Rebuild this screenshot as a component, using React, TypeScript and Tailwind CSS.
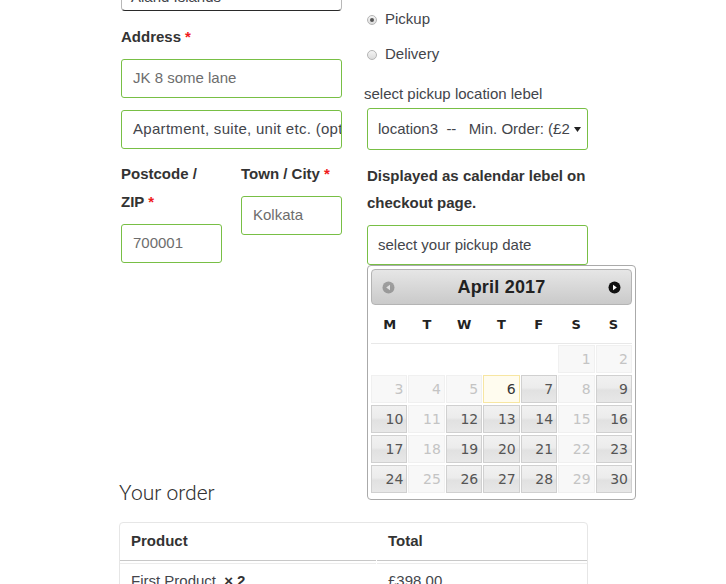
import React from "react";

const FONT = { fontFamily: '"Liberation Sans", Arial, sans-serif' };
const CAL_FONT = { fontFamily: '"DejaVu Sans", Verdana, sans-serif' };

function Req() {
  return <span className="text-[#f01c1c] font-bold ml-[4px]">*</span>;
}

function Radio({ checked, label }: { checked?: boolean; label: string }) {
  return (
    <div className="h-[35px] flex items-center">
      <span className="w-[10px] h-[10px] rounded-full border border-[#b5b5b5] bg-gradient-to-b from-[#f4f4f4] to-[#dcdcdc] flex items-center justify-center">
        {checked && <span className="w-[4px] h-[4px] rounded-full bg-[#555]" />}
      </span>
      <span className="ml-[8px] text-[15px] text-[#43454b]">{label}</span>
    </div>
  );
}

type Cell = { d: number; s: "on" | "off" | "today" } | null;

const rows: Cell[][] = [
  [null, null, null, null, null, { d: 1, s: "off" }, { d: 2, s: "off" }],
  [
    { d: 3, s: "off" },
    { d: 4, s: "off" },
    { d: 5, s: "off" },
    { d: 6, s: "today" },
    { d: 7, s: "on" },
    { d: 8, s: "off" },
    { d: 9, s: "on" },
  ],
  [
    { d: 10, s: "on" },
    { d: 11, s: "off" },
    { d: 12, s: "on" },
    { d: 13, s: "on" },
    { d: 14, s: "on" },
    { d: 15, s: "off" },
    { d: 16, s: "on" },
  ],
  [
    { d: 17, s: "on" },
    { d: 18, s: "off" },
    { d: 19, s: "on" },
    { d: 20, s: "on" },
    { d: 21, s: "on" },
    { d: 22, s: "off" },
    { d: 23, s: "on" },
  ],
  [
    { d: 24, s: "on" },
    { d: 25, s: "off" },
    { d: 26, s: "on" },
    { d: 27, s: "on" },
    { d: 28, s: "on" },
    { d: 29, s: "off" },
    { d: 30, s: "on" },
  ],
];

function DayCell({ c }: { c: Cell }) {
  if (!c) return <div className="h-[28px]" />;
  const base = "h-[28px] border flex items-center justify-end pr-[3px] text-[14px]";
  if (c.s === "on")
    return (
      <div
        className={
          base +
          " border-[#d0d0d0] text-[#555] bg-[linear-gradient(#f1f1f1_0%,#ececec_45%,#e1e1e1_55%,#e7e7e7_100%)]"
        }
      >
        {c.d}
      </div>
    );
  if (c.s === "today")
    return <div className={base + " border-[#f7e6a2] bg-[#fffcef] text-[#363636]"}>{c.d}</div>;
  return (
    <div className={base + " border-[#f0f0f0] bg-[#f8f8f8] text-[#c4c4c4]"}>{c.d}</div>
  );
}

function Calendar() {
  const names = ["M", "T", "W", "T", "F", "S", "S"];
  return (
    <div
      className="absolute left-0 top-full w-[269px] bg-white border border-[#aaaaaa] rounded-[4px] px-[3px] pt-[3px] pb-[6px] z-10"
      style={CAL_FONT}
    >
      <div className="h-[36px] rounded-[4px] border border-[#b4b4b4] bg-gradient-to-b from-[#e6e6e6] to-[#cacaca] flex items-center justify-between px-[10px]">
        <svg width="13" height="13" viewBox="0 0 13 13" className="opacity-40">
          <circle cx="6.5" cy="6.5" r="6" fill="#444" />
          <path d="M4.2 6.5 L8 3.8 L8 9.2 Z" fill="#eee" />
        </svg>
        <span
          className="text-[18px] font-bold text-[#222] tracking-[0.2px]"
          style={FONT}
        >
          April 2017
        </span>
        <svg width="13" height="13" viewBox="0 0 13 13">
          <circle cx="6.5" cy="6.5" r="6" fill="#111" />
          <path d="M8.8 6.5 L5 3.8 L5 9.2 Z" fill="#fff" />
        </svg>
      </div>
      <div className="grid grid-cols-7 h-[39px] items-center border-b border-[#e8e8e8] pt-[2px]">
        {names.map((n, i) => (
          <div key={i} className="text-center text-[13px] font-bold text-[#222]">
            {n}
          </div>
        ))}
      </div>
      <div className="mt-[1px] grid grid-cols-7 gap-x-[1px] gap-y-[2px]">
        {rows.flat().map((c, i) => (
          <DayCell key={i} c={c} />
        ))}
      </div>
    </div>
  );
}

export default function App() {
  const label = "text-[15px] font-bold text-[#333] leading-[28px]";
  const input =
    "h-[39px] border border-[#78bf45] rounded-[3px] flex items-center px-[11px] text-[15px] whitespace-nowrap overflow-hidden";
  return (
    <div className="w-[726px] h-[584px] bg-white overflow-hidden" style={FONT}>
      <div className="ml-[121px] w-[467px] grid grid-cols-[221px_221px] gap-x-[25px]">
        {/* left column */}
        <div>
          <div className="mt-[-16px] h-[27px] border border-[#b8b8b8] border-b-[#2a2a2a] rounded-[4px] flex items-center pl-[9px] text-[15px] text-[#43454b]">
            Aland Islands
          </div>
          <div className={label + " mt-[12px]"}>
            Address
            <Req />
          </div>
          <div className={input + " mt-[8px] text-[#6d6d6d]"}>JK 8 some lane</div>
          <div className={input + " mt-[12px] text-[#43454b] tracking-[0.3px]"}>
            Apartment, suite, unit etc. (optional)
          </div>
          <div className="mt-[11px] flex gap-x-[19px]">
            <div className="w-[101px]">
              <div className={label}>
                Postcode /<br />
                ZIP
                <Req />
              </div>
              <div className={input + " mt-[8px] text-[#6d6d6d]"}>700001</div>
            </div>
            <div className="w-[101px]">
              <div className={label}>
                Town / City
                <Req />
              </div>
              <div className={input + " mt-[8px] text-[#6d6d6d]"}>Kolkata</div>
            </div>
          </div>
        </div>

        {/* right column */}
        <div className="pt-[2px]">
          <Radio checked label="Pickup" />
          <Radio label="Delivery" />
          <div className="mt-[8px] ml-[-3px] text-[15px] leading-[28px] text-[#43454b]">
            select pickup location lebel
          </div>
          <div className="h-[42px] border border-[#78bf45] rounded-[3px] flex items-center pl-[10px] pr-[6px] text-[15px] text-[#43454b]">
            <span className="flex-1 overflow-hidden whitespace-pre">
              {"location3  --   Min. Order: (£2"}
            </span>
            <svg width="7" height="5" viewBox="0 0 7 5" className="ml-[4px]">
              <path d="M0 0 L7 0 L3.5 5 Z" fill="#222" />
            </svg>
          </div>
          <div className="mt-[12px] text-[15px] font-bold text-[#333] leading-[27px]">
            Displayed as calendar lebel on
            <br />
            checkout page.
          </div>
          <div className="relative mt-[9px]">
            <div className="h-[40px] border border-[#78bf45] rounded-[3px] flex items-center px-[10px] text-[15px] text-[#43454b]">
              select your pickup date
            </div>
            <Calendar />
          </div>
        </div>
      </div>

      {/* your order */}
      <div className="ml-[119px] w-[469px] mt-[214px]">
        <div
          className="text-[21px] font-light text-[#333] leading-[28px]"
          style={{ fontFamily: 'Roboto, "Liberation Sans", sans-serif' }}
        >
          Your order
        </div>
        <div className="mt-[15px] border border-[#e6e6e6] rounded-[4px] text-[15px] text-[#43454b]">
          <div className="grid grid-cols-[256px_210px] gap-x-[1px]">
            <div className="h-[38px] border-b border-[#c8c8c8] flex items-center px-[11px] font-bold text-[#333]">
              Product
            </div>
            <div className="h-[38px] border-b border-[#c8c8c8] flex items-center px-[11px] font-bold text-[#333]">
              Total
            </div>
          </div>
          <div className="grid grid-cols-[256px_210px] gap-x-[1px] mt-[2px]">
            <div className="h-[36px] border-t border-[#ececec] flex items-center px-[11px]">
              First Product&nbsp;
              <span className="font-bold text-[#333] ml-[4px]">× 2</span>
            </div>
            <div className="h-[36px] border-t border-[#ececec] flex items-center px-[11px]">
              £398.00
            </div>
          </div>
        </div>
      </div>
    </div>
  );
}
